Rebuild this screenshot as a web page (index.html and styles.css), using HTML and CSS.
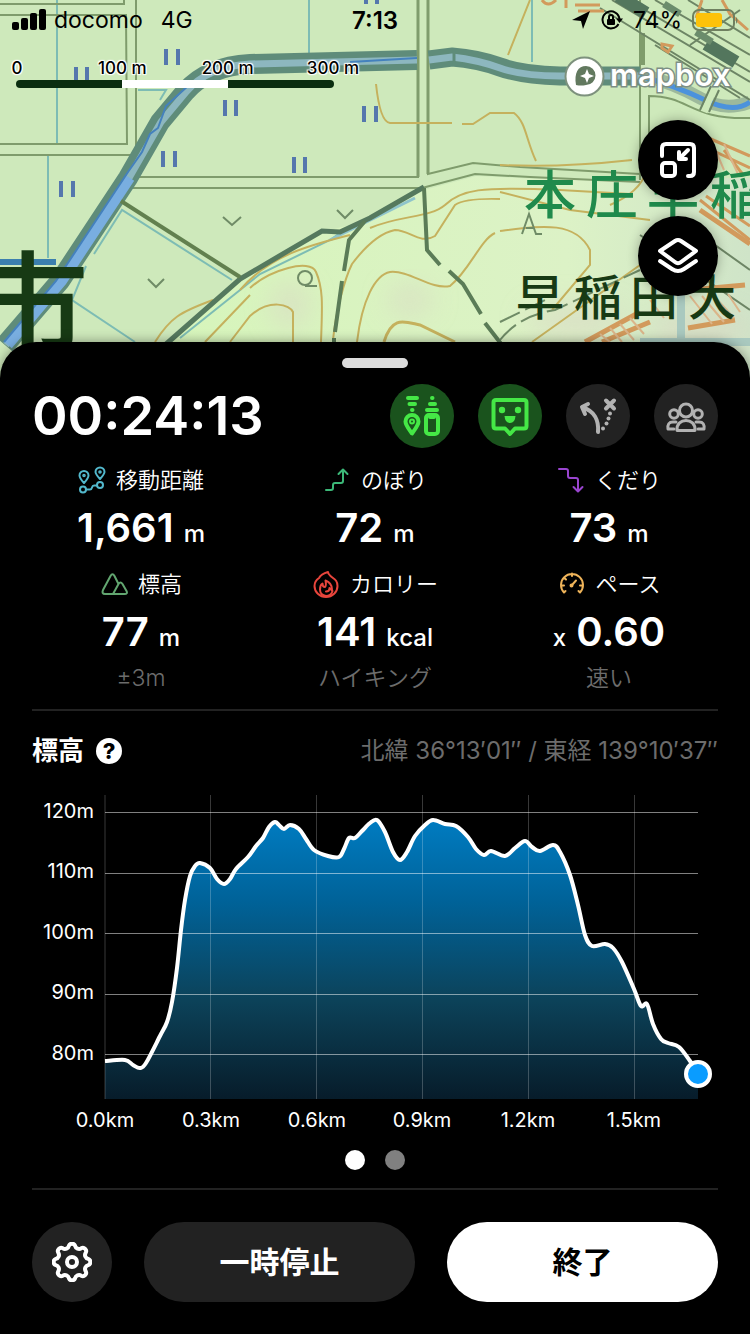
FILE: index.html
```html
<!DOCTYPE html>
<html lang="ja">
<head>
<meta charset="utf-8">
<meta name="viewport" content="width=device-width, initial-scale=1">
<title>活動記録</title>
<link rel="stylesheet" href="styles.css">
</head>
<body>
<div class="screen">
  <header class="map">
    <svg class="map-canvas" viewBox="0 0 750 378" preserveAspectRatio="xMidYMin slice" aria-hidden="true">
      <defs>
        <linearGradient id="hill" x1="0" y1="0" x2="1" y2="0">
          <stop offset="0" stop-color="#d6f5ba"/><stop offset=".7" stop-color="#dcf2c6"/><stop offset="1" stop-color="#cfe4c8"/>
        </linearGradient>
        <filter id="haze" x="-20%" y="-20%" width="140%" height="140%"><feGaussianBlur stdDeviation="14"/></filter>
      </defs>
      <rect width="750" height="378" fill="#cee9bb"/>
      <path d="M168 345L240 281 322 232 370 220 424 190 476 176 560 180 750 178V378H140z" fill="url(#hill)"/>
      <g filter="url(#haze)" fill="#d9d9c4" opacity=".7">
        <ellipse cx="290" cy="305" rx="18" ry="22"/><ellipse cx="410" cy="300" rx="22" ry="14"/><ellipse cx="575" cy="320" rx="50" ry="16"/><ellipse cx="700" cy="330" rx="50" ry="20"/>
      </g>
      <g fill="none" stroke="#7dbcb4" stroke-width="2">
        <path d="M57 0V143M48 155V258M309 0V56M532 0V62M138 90H166L160 100M232 280L122 210 94 254M86 266L72 300 135 342M180 338L260 274 330 240 350 226"/>
        <path d="M330 240L415 198" stroke="#8fc4cb" stroke-width="3"/>
      </g>
      <g fill="none" stroke="#7f9c6c" stroke-width="3">
        <path d="M0 4H124V0M0 15H126L127 144H0M0 155H138M136 0V152M418 0V177H138M428 0V174L473 163 520 167 640 174M132 188H422L475 174 530 177 640 182" stroke-width="2"/>
        <path d="M418 0V177M428 0V174"/>
        <path d="M649 180V96C690 96 690 120 750 118M640 0V180" stroke-width="2"/>
        <path d="M643 33V65" stroke-width="4"/>
      </g>
      <g fill="none" stroke="#c5b15d" stroke-width="2">
        <path d="M376 84Q380 122 390 123H452M462 124H473L490 113H514C526 122 526 140 536 161M530 0L508 55M500 165Q560 168 632 160"/>
        <path d="M155 342C170 318 180 312 213 300M240 290C270 255 310 245 350 235M250 288C270 270 310 258 316 272 324 290 322 310 321 342M205 342L250 295M230 342L250 316C270 298 290 305 293 312V342"/>
        <path d="M333 340C336 310 345 278 352 264C370 240 385 232 395 230 410 230 420 245 435 236L455 205Q465 198 500 199"/>
        <path d="M357 342C362 300 375 275 390 272 410 270 430 290 450 286 470 270 480 240 495 233M370 228C400 215 430 218 445 205 460 190 480 186 560 190L630 194"/>
        <path d="M384 342C392 315 405 322 420 325L455 342" stroke-width="3"/>
        <path d="M500 231C540 226 575 220 590 250V265L552 310M500 192L570 210 650 220M532 342L640 265M610 205Q640 192 646 172"/>
      </g>
      <g fill="none" stroke="#5f8c7a">
        <path d="M5 345L60 281 128 178 160 122 185 92Q208 66 250 64L417 60" stroke-width="20"/>
        <path d="M429 60L452 57Q478 59 500 67T560 76H640" stroke-width="19"/>
        <path d="M6 345L61 281 129 178 161 122 186 92Q208 66 250 64L417 60M429 60L452 57Q478 60 500 68T560 76H640" stroke="#8db7bf" stroke-width="7"/>
        <path d="M8 345L62 281 130 178" stroke="#79aee0" stroke-width="10"/>
        <path d="M4 342L56 281 128 172 142 152 150 134 158 128 166 106 190 84M350 62L417 58" stroke="#4481bd" stroke-width="2"/>
        <path d="M454 50V64" stroke-width="3"/>
        <path d="M640 74Q676 84 700 98T750 102" stroke="#9db99b" stroke-width="13"/>
        <path d="M640 76Q676 86 705 100T750 102" stroke="#4c92dc" stroke-width="5"/>
        <path d="M715 86L704 112" stroke="#cee9bb" stroke-width="7"/>
      </g>
      <path d="M0 262H56" stroke="#3b7fae" stroke-width="6"/>
      <path d="M165 345L240 279 322 231 340 232 370 218 424 187" fill="none" stroke="#55795e" stroke-width="5"/>
      <path d="M121 201L240 277" stroke="#62804f" stroke-width="4"/>
      <g fill="none" stroke="#5b7c57" stroke-width="4">
        <path d="M365 221L349 240 344 271M342 281L335 332M334 338V342M424 188L427 250 440 265M449 271L463 284 481 314M485 323L502 345"/>
      </g>
      <g fill="none" stroke="#6f8b66" stroke-width="2">
        <path d="M223 217L232 225 241 217M148 279L156 287 164 279M337 210L345 218 353 210M317 286H305"/>
        <path d="M500 340Q520 315 555 310L640 270M500 322L545 300" stroke-dasharray="22 6"/>
        <circle cx="305" cy="278" r="7"/>
        <path d="M522 234L529 214 536 234H542M526 228H534"/>
      </g>
      <g fill="none" stroke="#6d8565" stroke-width="2">
        <path d="M612 0L750 82M628 0L750 72M655 0L750 55M688 0L750 38M655 45L740 98M600 8L750 100M719 90L709 112M711 86L700 110M740 10L690 45M640 235L750 310M680 220L750 270"/>
        <path d="M618 -4L646 13M706 44L736 62" stroke="#53765d" stroke-width="13"/>
        <path d="M696 32L712 42M664 4L680 14" stroke="#6b8c6c" stroke-width="7"/>
      </g>
      <g fill="none" stroke="#d29a5c" stroke-width="3">
        <path d="M542 0Q548 8 556 0M566 8V0M575 5H600M578 11H604M702 0L696 18M722 0L730 14 748 30M662 48L668 52 672 46 662 44zM690 130L750 156M690 140L750 168M700 200L750 240M706 196L750 226M724 150L744 176"/>
        <path d="M585 342L640 312M602 342L650 322M690 290L745 285M688 328L735 320M700 210L750 244" stroke-width="5"/>
      </g>
      <g stroke="#dbb58a" stroke-width="2">
        <path d="M600 334L610 342M610 328L622 342M620 324L634 340M630 318L644 334M690 296L712 324M702 296L724 322M714 296L734 318M728 294L740 312M650 300L664 318M700 140L712 165M712 142L724 170M724 144L738 174"/>
      </g>
      <path d="M681 290V342M640 342H750" stroke="#a9c9bf" stroke-width="8"/>
      <g class="paddy">
        <path d="M76 67v14M87 67v14M166 49v16M178 49v16M225 100v16M236 100v16M163 151v16M175 151v16M61 181v16M73 181v16M364 106v16M376 106v16M294 157v16M305 157v16M366 0v4M377 0v4"/>
      </g>
      <g class="place">
        <text class="place-station" x="524 586 647 710" y="214">本庄早稲</text>
        <text class="place-school" x="516 574 630 688" y="315">早稲田大</text>
        <text class="place-city" x="-33" y="354">市</text>
      </g>
    </svg>

    <div class="status">
      <div class="status-side">
        <svg width="34" height="22" viewBox="0 0 34 22" aria-hidden="true"><rect x="0" y="13" width="7" height="8" rx="2"/><rect x="9" y="9" width="7" height="12" rx="2"/><rect x="18" y="4" width="7" height="17" rx="2"/><rect x="27" y="0" width="7" height="21" rx="2"/></svg>
        <span>docomo</span><span class="network">4G</span>
      </div>
      <time class="clock">7:13</time>
      <div class="status-side status-right">
        <svg width="20" height="20" viewBox="0 0 20 20" aria-hidden="true"><path d="M19 1L12 19 10 11 1 10z"/></svg>
        <svg width="22" height="20" viewBox="0 0 22 20" aria-hidden="true"><path d="M17.500 14A8.500 8.500 0 1 1 18.500 9" fill="none" stroke="#000" stroke-width="2"/><path d="M15 8.500H22L18.500 13z"/><rect x="6" y="9" width="8" height="6" rx="1"/><path d="M8 9V7a2 2 0 0 1 4 0v2" fill="none" stroke="#000" stroke-width="2"/></svg>
        <span>74%</span>
        <svg width="46" height="24" viewBox="0 0 46 24" aria-hidden="true"><rect x="1" y="2" width="41" height="20" rx="6" fill="none" stroke="#6f8060" stroke-width="2"/><rect x="4" y="5" width="26" height="14" rx="3" fill="#fdc20a"/><path d="M44 9q3 3 0 7z" fill="#6f8060"/></svg>
      </div>
    </div>

    <div class="map-info">
      <div class="scale">
        <div class="scale-labels"><span>0</span><span>100 m</span><span>200 m</span><span>300 m</span></div>
        <div class="scale-bar"></div>
      </div>
      <svg class="mapbox" width="170" height="42" viewBox="0 0 170 42" role="img" aria-label="mapbox">
        <circle cx="20.500" cy="20.500" r="19" fill="#fff" stroke="#7d917d" stroke-width="2"/>
        <path d="M12 29C10 17 14 10 22 10a9.500 9.500 0 0 1 0 19Q17 30 12 29z" fill="#62795f"/>
        <path d="M23 13l2 5 5 2-5 2-2 5-2-5-5-2 5-2z" fill="#fff"/>
        <text class="mapbox-word" x="46" y="30">mapbox</text>
      </svg>
    </div>

    <div class="map-controls">
      <button class="fab" type="button" aria-label="地図を縮小">
        <svg viewBox="0 0 80 80"><path d="M24 36V28q0-4 4-4H52q4 0 4 4V52q0 4-4 4H50"/><rect x="24" y="43" width="13" height="13" rx="3"/><path d="M50 30L41 39M41 32V39H48"/></svg>
      </button>
      <button class="fab" type="button" aria-label="レイヤー">
        <svg viewBox="0 0 80 80"><path d="M22 35L37 25Q40 23 43 25L58 35 43 46Q40 48.500 37 46z"/><path d="M22 45L34 53Q40 57 46 53L58 45"/></svg>
      </button>
    </div>
  </header>

  <main class="sheet">
    <div class="handle"></div>

    <div class="head">
      <time class="timer">00:24:13</time>
      <div class="modes">
        <button class="mode on" type="button" aria-label="位置情報の共有">
          <svg viewBox="0 0 64 64"><path d="M18 14H27M19.500 20H25M22 26H22.500M42 14H42.500M40 20H45M37 26H47"/><path d="M22 49.500C18 44 15.500 41 15.500 37.500a6.500 6.500 0 0 1 13 0C28.500 41 26 44 22 49.500z"/><circle cx="22" cy="37.500" r="1"/><rect x="36" y="31" width="12" height="19" rx="3"/><path d="M40 33H44"/></svg>
        </button>
        <button class="mode on" type="button" aria-label="フィールドメモ">
          <svg viewBox="0 0 64 64"><path d="M18 16H46q2.500 0 2.500 2.500V42q0 2.500-2.500 2.500H37L32 50 27 44.500H18q-2.500 0-2.500-2.500V18.500Q15.500 16 18 16z"/><g class="solid"><circle cx="24" cy="26" r="3.200"/><circle cx="40" cy="26" r="3.200"/><path d="M26.500 32H37.500Q37 39 32 39T26.500 32z"/></g></svg>
        </button>
        <button class="mode" type="button" aria-label="ルート">
          <svg viewBox="0 0 64 64"><path d="M32 48C33 36 28 27 17 23.500M22 20L16 23 19 30M40 16.500L48 24.500M48 16.500L40 24.500"/><g class="solid"><circle cx="44" cy="29.500" r="2"/><circle cx="42.500" cy="34.500" r="2"/><circle cx="40.500" cy="39.500" r="2"/><circle cx="37" cy="44.500" r="2"/></g></svg>
        </button>
        <button class="mode group" type="button" aria-label="グループ">
          <svg viewBox="0 0 64 64"><circle cx="32" cy="26.500" r="6.500"/><path d="M23 46.500H41C42 33 22 33 23 46.500z"/><circle cx="20" cy="30" r="4.300"/><circle cx="44" cy="30" r="4.300"/><path d="M20 45H14Q13 38 19 38H22M44 45H50Q51 38 45 38H42"/></svg>
        </button>
      </div>
    </div>

    <section class="stats">
      <div class="stat">
        <h2 class="stat-label"><svg class="c-teal" viewBox="0 0 28 28"><path d="M6 17Q1.500 12 1.500 9.500a4.500 4.500 0 0 1 9 0Q10.500 12 6 17zM22 13Q17.500 8 17.500 6a4.500 4.500 0 0 1 9 0Q26.500 8 22 13z"/><circle cx="6" cy="9.500" r=".8"/><circle cx="22" cy="6" r=".8"/><circle cx="5" cy="23.500" r="3"/><circle cx="22" cy="19" r="3"/><path d="M8 23.500H12C15 23.500 13 19.500 16 19.500H19"/></svg>移動距離</h2>
        <p class="stat-value">1,661 <small>m</small></p>
      </div>
      <div class="stat">
        <h2 class="stat-label"><svg class="c-green" viewBox="0 0 28 28"><path d="M3 24H8q2 0 2-2V19q0-2 2-2h6q2 0 2-2V4M15.500 8L20 3.500 24.500 8"/></svg>のぼり</h2>
        <p class="stat-value">72 <small>m</small></p>
      </div>
      <div class="stat">
        <h2 class="stat-label"><svg class="c-purple" viewBox="0 0 28 28"><path d="M2 3H9q2 0 2 2v5q0 2 2 2h6q2 0 2 2V25M16.500 21L21 25.500 25.500 21"/></svg>くだり</h2>
        <p class="stat-value">73 <small>m</small></p>
      </div>
      <div class="stat">
        <h2 class="stat-label"><svg class="c-sage" viewBox="0 0 28 28"><path d="M18 13L14.500 6Q12.500 2.500 10.500 6L3 20Q1.500 24 5 24H24.500Q28 24 26.500 21L22.500 14Q20.500 11 18.500 14L13 24"/></svg>標高</h2>
        <p class="stat-value">77 <small>m</small></p>
        <p class="stat-note">±3m</p>
      </div>
      <div class="stat">
        <h2 class="stat-label"><svg class="c-red" viewBox="0 0 28 28"><path d="M16 2Q9 4 7 8Q2.500 11 2.500 16a11.500 11 0 0 0 23 0C25.500 10 22 9 18.500 6Q16 4 16 2z"/><path d="M14 26Q8 25 8 19.500 8 15 10.500 13.500 10.500 17 13 17 14.500 16 13.500 10.500 20 13 20 19.500M14 26Q19 26 20.500 21L17.500 18Q17.500 21.500 14 21.500"/></svg>カロリー</h2>
        <p class="stat-value">141 <small>kcal</small></p>
        <p class="stat-note">ハイキング</p>
      </div>
      <div class="stat">
        <h2 class="stat-label"><svg class="c-amber" viewBox="0 0 28 28"><path d="M6 22.500A11 11 0 1 1 22 22.500L20.500 21M6 22.500L7.500 21M3.500 15.500H6M24.500 15.500H22M14 3.500V6M6.500 8L8 9.500M14 15L18 10.500"/><circle cx="13.500" cy="15.500" r="1"/></svg>ペース</h2>
        <p class="stat-value"><small>x</small> 0.60</p>
        <p class="stat-note">速い</p>
      </div>
    </section>

    <section class="elevation">
      <div class="elevation-head">
        <h2 class="elevation-title">標高</h2>
        <button class="help" type="button" aria-label="ヘルプ">?</button>
        <p class="coords">北緯 36°13′01″ / 東経 139°10′37″</p>
      </div>
      <svg class="chart" viewBox="32 771 686 367" role="img" aria-label="標高グラフ">
        <defs><linearGradient id="fill" gradientUnits="userSpaceOnUse" x1="0" y1="818" x2="0" y2="1099"><stop offset="0" stop-color="#007cc2"/><stop offset=".3" stop-color="#006298"/><stop offset=".65" stop-color="#0c4259"/><stop offset="1" stop-color="#071c2a"/></linearGradient></defs>
        <path id="area" fill="url(#fill)"/>
        <path class="grid-x" d="M105 795V1099M210.500 795V1099M316.500 795V1099M422.500 795V1099M528.500 795V1099M634.500 795V1099"/>
        <path class="grid-y" d="M105 812.500H698M105 873.500H698M105 933.500H698M105 994.500H698M105 1054.500H698"/>
        <path id="line" class="profile"/>
        <circle class="here" cx="698" cy="1074" r="12"/>
        <g class="axis axis-y"><text x="94" y="818">120m</text><text x="94" y="878">110m</text><text x="94" y="939">100m</text><text x="94" y="999">90m</text><text x="94" y="1060">80m</text></g>
        <g class="axis axis-x"><text x="105" y="1127">0.0km</text><text x="211" y="1127">0.3km</text><text x="317" y="1127">0.6km</text><text x="422" y="1127">0.9km</text><text x="528" y="1127">1.2km</text><text x="634" y="1127">1.5km</text></g>
      </svg>
      <div class="pager">
        <button class="dot current" type="button" aria-label="ページ1"></button>
        <button class="dot" type="button" aria-label="ページ2"></button>
      </div>
    </section>

    <footer class="actions">
      <button class="settings" type="button" aria-label="設定">
        <svg viewBox="-20 -20 40 40"><path d="M-3.100-16.200A3.300 3.300 0 0 1 3.100-16.200A4 4 0 0 0 9.200-13.700A3.300 3.300 0 0 1 13.700-9.200A4 4 0 0 0 16.200-3.100A3.300 3.300 0 0 1 16.200 3.100A4 4 0 0 0 13.700 9.200A3.300 3.300 0 0 1 9.200 13.700A4 4 0 0 0 3.100 16.200A3.300 3.300 0 0 1-3.100 16.200A4 4 0 0 0-9.200 13.700A3.300 3.300 0 0 1-13.700 9.200A4 4 0 0 0-16.200 3.100A3.300 3.300 0 0 1-16.200-3.100A4 4 0 0 0-13.700-9.200A3.300 3.300 0 0 1-9.200-13.700A4 4 0 0 0-3.100-16.200z"/><circle r="5"/></svg>
      </button>
      <button class="action" type="button">一時停止</button>
      <button class="action primary" type="button">終了</button>
    </footer>
  </main>
</div>
<script src="chart.js"></script>
</body>
</html>
```

FILE: styles.css
```css
* { box-sizing: border-box; }

body {
  margin: 0;
  background: #000;
  color: #fff;
  font-family: Inter, "Noto Sans CJK JP", sans-serif;
}

h2, p { margin: 0; font-weight: 400; }

button {
  padding: 0;
  border: 0;
  color: inherit;
  font: inherit;
  cursor: pointer;
}

.screen {
  display: flex;
  flex-direction: column;
  min-height: 100vh;
}

/* Map */
.map {
  position: relative;
  padding-bottom: 82px;
  overflow: hidden;
  color: #000;
}

.map-canvas {
  position: absolute;
  inset: 0;
  width: 100%;
  height: 100%;
}

.paddy { stroke: #5577ad; stroke-width: 4; }
.place { font-family: "Noto Sans CJK JP", sans-serif; }
.place-station { font-size: 52px; font-weight: 500; fill: #1f8a4c; }
.place-school { font-size: 48px; font-weight: 500; fill: #173a14; }
.place-city { font-size: 122px; font-weight: 500; fill: #173a14; }

.status {
  position: relative;
  display: grid;
  grid-template-columns: 1fr auto 1fr;
  align-items: center;
  height: 40px;
  padding: 0 12px;
  font-size: 23px;
}

.status-side { display: flex; align-items: center; gap: 8px; }
.status-right { justify-content: flex-end; gap: 10px; }
.network { margin-left: 10px; }
.clock { font-size: 24px; font-weight: 600; }

.map-info {
  position: relative;
  display: flex;
  justify-content: space-between;
  padding: 16px 16px 0;
}

.scale { width: 318px; }

.scale-labels {
  display: flex;
  justify-content: space-between;
  margin: 0 -26px;
  font-size: 17px;
  font-weight: 500;
  line-height: 24px;
  text-shadow: 0 0 2px #fff, 1px 1px 1px #fff, -1px -1px 1px #fff, 1px -1px 1px #fff, -1px 1px 1px #fff;
}

.scale-labels span { width: 54px; text-align: center; }

.scale-bar {
  height: 8px;
  border-radius: 4px;
  background: linear-gradient(90deg, #0b2e10 33.3%, #fff 33.3% 66.6%, #0b2e10 66.6%);
}

.mapbox { display: block; }

.mapbox-word {
  font: 600 31px Inter, sans-serif;
  fill: #fff;
  stroke: #7d8f84;
  stroke-width: 3px;
  paint-order: stroke;
}

.map-controls {
  position: relative;
  display: flex;
  flex-direction: column;
  align-items: flex-end;
  gap: 16px;
  padding: 22px 32px 0;
}

.fab {
  width: 80px;
  height: 80px;
  border-radius: 50%;
  background: #000;
  color: #fff;
  box-shadow: 0 0 12px rgba(0, 0, 0, .3);
}

.fab svg, .mode svg { display: block; width: 100%; height: 100%; }

.fab svg, .mode svg, .stat-label svg, .settings svg {
  fill: none;
  stroke: currentColor;
  stroke-width: 4px;
  stroke-linecap: round;
  stroke-linejoin: round;
}

/* Sheet */
.sheet {
  position: relative;
  display: flex;
  flex: 1;
  flex-direction: column;
  margin-top: -36px;
  padding: 16px 32px 32px;
  border-radius: 36px 36px 0 0;
  background: #000;
  box-shadow: 0 0 12px rgba(0, 0, 0, .4);
}

.handle {
  align-self: center;
  width: 66px;
  height: 10px;
  border-radius: 5px;
  background: #dcdcdc;
}

.head {
  display: flex;
  align-items: center;
  justify-content: space-between;
  margin-top: 16px;
}

.timer {
  font-size: 54px;
  font-weight: 600;
  line-height: 64px;
}

.modes { display: flex; gap: 24px; }

.mode {
  width: 64px;
  height: 64px;
  border-radius: 50%;
  background: #222;
  color: #b2b2b2;
}

.mode.on { background: #1a531d; color: #45e846; }
.mode .solid { fill: currentColor; stroke: none; }
.mode.group svg { stroke-width: 3px; }

.stats {
  display: grid;
  grid-template-columns: repeat(3, 1fr);
  row-gap: 8px;
  margin: 0 -8px;
  padding: 12px 0 13px;
}

.stat { text-align: center; }

.stat-label {
  display: flex;
  align-items: center;
  justify-content: center;
  gap: 10px;
  font-size: 22px;
  font-weight: 350;
  line-height: 40px;
}

.stat-label svg { width: 28px; height: 28px; stroke-width: 2px; }
.c-teal { color: #52b8cc; }
.c-green { color: #3cb878; }
.c-purple { color: #9a45d0; }
.c-sage { color: #62a670; }
.c-red { color: #e8453c; }
.c-amber { color: #efb45a; }

.stat-value {
  font-size: 40px;
  font-weight: 600;
  line-height: 56px;
}

.stat-value small { font-size: 24px; font-weight: 500; line-height: 24px; }

.stat-note {
  color: #6c6c6c;
  font-size: 23px;
  font-weight: 350;
  line-height: 36px;
}

.elevation { padding-top: 20px; border-top: 2px solid #222; }

.elevation-head {
  display: flex;
  align-items: center;
  gap: 12px;
  line-height: 40px;
}

.elevation-title { font-size: 26px; font-weight: 700; }

.help {
  width: 26px;
  height: 26px;
  border-radius: 50%;
  background: #fff;
  color: #000;
  font-size: 22px;
  font-weight: 800;
  line-height: 26px;
}

.coords {
  margin-left: auto;
  color: #6c6c6c;
  font-size: 24px;
  font-weight: 400;
}

.chart { display: block; width: 100%; }
.grid-x { stroke: #fff; stroke-opacity: .22; }
.grid-y { stroke: #fff; stroke-opacity: .5; }
.profile { fill: none; stroke: #fff; stroke-width: 4px; stroke-linejoin: round; }
.here { fill: #0a9cff; stroke: #fff; stroke-width: 4px; }
.axis { fill: #fff; font-size: 20px; }
.axis-y { text-anchor: end; }
.axis-x { text-anchor: middle; }

.pager {
  display: flex;
  justify-content: center;
  gap: 20px;
  padding: 12px 0 18px;
}

.dot {
  width: 20px;
  height: 20px;
  border-radius: 50%;
  background: #808080;
}

.dot.current { background: #fff; }

.actions {
  display: flex;
  gap: 32px;
  padding-top: 32px;
  border-top: 2px solid #222;
}

.settings {
  display: grid;
  place-items: center;
  flex: none;
  width: 80px;
  height: 80px;
  border-radius: 50%;
  background: #222;
}

.settings svg { width: 40px; height: 40px; }

.action {
  flex: 1;
  height: 80px;
  padding-bottom: 4px;
  border-radius: 40px;
  background: #222;
  font-size: 30px;
  font-weight: 600;
}

.action.primary { background: #fff; color: #000; }
```

FILE: chart.js
```javascript
const points = [
  [105, 1061], [125, 1060], [133, 1065], [140, 1068], [146, 1063], [160, 1036], [167, 1022],
  [172, 1002], [177, 968], [181, 930], [185, 900], [190, 876], [195, 866], [200, 863],
  [210, 868], [217, 879], [224, 884], [230, 879], [236, 869], [248, 857], [256, 846],
  [263, 838], [269, 827], [275, 822], [279, 825], [284, 829], [290, 825], [299, 829], [306, 839],
  [314, 850], [328, 856], [339, 857], [344, 849], [349, 838], [355, 838], [362, 831],
  [370, 823], [377, 820], [385, 832], [393, 852], [400, 860], [407, 852], [415, 836],
  [425, 825], [433, 820], [445, 824], [456, 826], [468, 837], [476, 849], [484, 855],
  [491, 851], [505, 856], [515, 848], [525, 841], [532, 847], [540, 851], [553, 845],
  [560, 852], [570, 875], [578, 905], [585, 935], [592, 946], [605, 944], [613, 948],
  [622, 962], [634, 989], [641, 1006], [647, 1004], [653, 1024], [661, 1039], [668, 1043],
  [679, 1047], [690, 1061], [698, 1073]
];

// Catmull-Rom spline through the samples, written as cubic segments.
function smooth(p) {
  let d = `M${p[0]}`;
  for (let i = 0; i < p.length - 1; i++) {
    const a = p[i - 1] || p[i], b = p[i], c = p[i + 1], e = p[i + 2] || c;
    d += `C${b[0] + (c[0] - a[0]) / 6},${b[1] + (c[1] - a[1]) / 6} ` +
      `${c[0] - (e[0] - b[0]) / 6},${c[1] - (e[1] - b[1]) / 6} ${c}`;
  }
  return d;
}

const profile = smooth(points);
document.getElementById("line").setAttribute("d", profile);
document.getElementById("area").setAttribute("d", `${profile}V1099H105Z`);
```
